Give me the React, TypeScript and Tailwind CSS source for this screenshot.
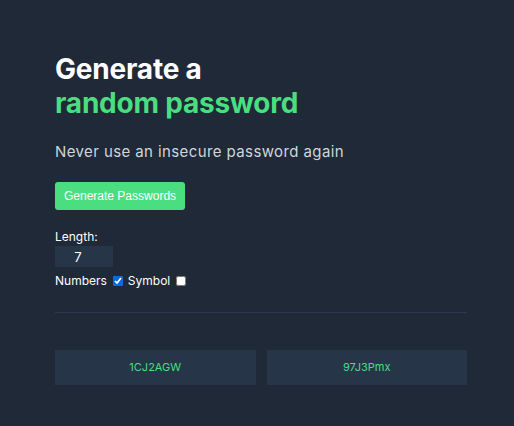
import { useState } from "react";

const App = () => {
  const [length, setLength] = useState("7");
  const [numbers, setNumbers] = useState(true);
  const [symbols, setSymbols] = useState(false);
  const passwords = ["1CJ2AGW", "97J3Pmx"];

  return (
    <div className="min-h-screen w-full bg-[#1f2937] font-['Inter',sans-serif]">
      <div className="w-[412px] ml-[55px] pt-[52px]">
        <h1 className="text-[28px] leading-[34px] font-bold text-white tracking-[-0.2px]">
          Generate a
          <br />
          <span className="text-[#4ade80]">random password</span>
        </h1>
        <p className="mt-[21px] text-[15px] text-[#d1d5db] tracking-[0.4px]">
          Never use an insecure password again
        </p>
        <button className="mt-[18px] h-[28px] px-[9px] rounded-[3px] bg-[#4ade80] text-white text-[12px] font-['Liberation_Sans',sans-serif]">
          Generate Passwords
        </button>
        <div className="mt-[20px] text-[12px] text-white leading-[14px]">Length:</div>
        <input
          className="w-[58px] h-[21px] pr-[12px] bg-[#273549] text-white text-[13px] text-center outline-none"
          value={length}
          onChange={(e) => setLength(e.target.value)}
        />
        <div className="mt-[4px] flex items-center text-[12px] text-white">
          <span>Numbers</span>
          <input
            type="checkbox"
            className="ml-[6px] mr-[5px] w-[10px] h-[10px] accent-[#0b6bd8]"
            checked={numbers}
            onChange={() => setNumbers(!numbers)}
          />
          <span>Symbol</span>
          <input
            type="checkbox"
            className="ml-[6px] w-[10px] h-[10px]"
            checked={symbols}
            onChange={() => setSymbols(!symbols)}
          />
        </div>
        <div className="mt-[22px] h-px bg-[#2b3a4f]" />
        <div className="mt-[37px] grid grid-cols-2 gap-[11px]">
          {passwords.map((pw) => (
            <div
              key={pw}
              className="h-[35px] flex items-center justify-center bg-[#273549] text-[#4ade80] text-[11px]"
            >
              {pw}
            </div>
          ))}
        </div>
      </div>
    </div>
  );
};

export default App;
